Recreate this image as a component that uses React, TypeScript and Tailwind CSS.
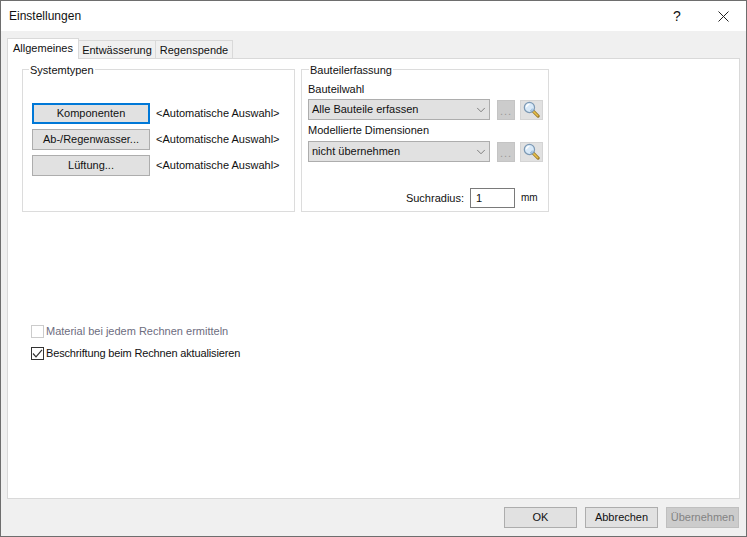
import React from 'react';
import { ChevronDown } from 'lucide-react';

const font = { fontFamily: '"Liberation Sans", Arial, sans-serif' };

const Magnifier = () => (
  <svg width="17" height="17" viewBox="0 0 18 18">
    <path d="M10.5 10.5 L16 16" stroke="#9a7a2a" strokeWidth="3.4" strokeLinecap="round" />
    <path d="M11 11 L15.6 15.6" stroke="#e8c04a" strokeWidth="1.6" strokeLinecap="round" />
    <circle cx="6.8" cy="6.8" r="5.4" fill="#d8e9f8" stroke="#7d9ab5" strokeWidth="1.3" />
    <path d="M3.6 6.6 A3.4 3.4 0 0 1 6.8 3.5" fill="none" stroke="#ffffff" strokeWidth="1.4" />
    <path d="M10 8 A3.6 3.6 0 0 1 7.6 10.4" fill="none" stroke="#8fb8de" strokeWidth="1.2" />
  </svg>
);

const TypeRow = ({ label, focused }: { label: string; focused?: boolean }) => (
  <div className="flex items-center gap-[6px]">
    <button
      className={
        focused
          ? 'w-[118px] h-[21px] bg-[#e1e1e1] border-2 border-[#0078d7] text-center text-[11px] leading-none'
          : 'w-[118px] h-[21px] bg-[#e1e1e1] border border-[#adadad] text-center text-[11px] leading-none'
      }
    >
      {label}
    </button>
    <span className="text-[11px] leading-none whitespace-nowrap">&lt;Automatische Auswahl&gt;</span>
  </div>
);

const SelectRow = ({ value }: { value: string }) => (
  <div className="flex items-center">
    <div className="w-[182px] h-[21px] bg-[#e1e1e1] border border-[#adadad] flex items-center justify-between pl-[3px] pr-[1px]">
      <span className="text-[11px] leading-none">{value}</span>
      <ChevronDown className="w-[14px] h-[14px] text-[#555555]" strokeWidth={1.2} />
    </div>
    <div className="ml-[7px] w-[18px] h-[20px] bg-[#cccccc] border border-[#c4c4c4] flex items-end justify-center text-[11px] leading-[15px] tracking-[1px] text-[#999999]">
      ...
    </div>
    <div className="ml-[5px] w-[23px] h-[20px] bg-[#e1e1e1] border border-[#d4d4d4] flex items-center justify-center">
      <Magnifier />
    </div>
  </div>
);

const FooterButton = ({ label, disabled }: { label: string; disabled?: boolean }) => (
  <button
    className={
      disabled
        ? 'w-[73px] h-[21px] bg-[#cccccc] border border-[#bfbfbf] text-[#838383] text-[11px] leading-none'
        : 'w-[73px] h-[21px] bg-[#e1e1e1] border border-[#adadad] text-[11px] leading-none'
    }
  >
    {label}
  </button>
);

export default function App() {
  return (
    <div style={font} className="w-[747px] h-[537px] bg-[#f0f0f0] border border-[#6e6e6e] flex flex-col text-[#111111] overflow-hidden">
      {/* title bar */}
      <div className="h-[30px] shrink-0 bg-white flex items-center pl-[8px]">
        <span className="text-[12px] flex-1">Einstellungen</span>
        <span className="w-[46px] text-center text-[14px] mr-[18px]">?</span>
        <svg className="mr-[17px]" width="11" height="11" viewBox="0 0 11 11">
          <path d="M0.5 0.5 L10.5 10.5 M10.5 0.5 L0.5 10.5" stroke="#222222" strokeWidth="1" fill="none" />
        </svg>
      </div>

      {/* tabs */}
      <div className="ml-[6px] mt-[7px] h-[20px] shrink-0 flex items-end relative z-10">
        <div className="w-[72px] h-[21px] -mb-[1px] bg-white border border-b-0 border-[#d9d9d9] text-[11px] leading-[19px] text-center">
          Allgemeines
        </div>
        <div className="w-[77px] h-[18px] border border-l-0 border-b-0 border-[#d9d9d9] text-[11px] leading-[19px] text-center">
          Entwässerung
        </div>
        <div className="w-[77px] h-[18px] border border-l-0 border-b-0 border-[#d9d9d9] text-[11px] leading-[19px] text-center">
          Regenspende
        </div>
      </div>

      {/* panel */}
      <div className="mx-[6px] h-[441px] shrink-0 bg-white border border-[#d9d9d9] pl-[14px] flex flex-col">
        <div className="flex gap-[6px] items-start">
          <fieldset className="w-[273px] min-w-0 h-[153px] border border-[#dcdcdc] pl-[9px]">
            <legend className="ml-[-3px] px-[1px] pt-[3px] pb-[1px] text-[11px] leading-[16px]">Systemtypen</legend>
            <div className="mt-[24px] flex flex-col gap-[5px]">
              <TypeRow label="Komponenten" focused />
              <TypeRow label="Ab-/Regenwasser..." />
              <TypeRow label="Lüftung..." />
            </div>
          </fieldset>

          <fieldset className="w-[248px] min-w-0 h-[153px] border border-[#dcdcdc] pl-[6px]">
            <legend className="ml-[1px] px-[1px] pt-[3px] pb-[1px] text-[11px] leading-[16px]">Bauteilerfassung</legend>
            <div className="text-[11px] leading-[16px] mt-[2px] mb-[2px]">Bauteilwahl</div>
            <SelectRow value="Alle Bauteile erfassen" />
            <div className="text-[11px] leading-[16px] mt-[2px] mb-[3px]">Modellierte Dimensionen</div>
            <SelectRow value="nicht übernehmen" />
            <div className="mt-[26px] flex items-center">
              <span className="w-[156px] text-right text-[11px] leading-none">Suchradius:</span>
              <div className="ml-[6px] w-[45px] h-[20px] bg-white border border-[#7a7a7a] text-[11px] leading-[18px] pl-[5px]">1</div>
              <span className="ml-[6px] text-[10px] leading-none">mm</span>
            </div>
          </fieldset>
        </div>

        <div className="mt-[113px] ml-[9px] flex flex-col gap-[9px]">
          <label className="flex items-center gap-[2px] text-[11px] leading-[13px] text-[#6d6d80]">
            <span className="w-[13px] h-[13px] border border-[#cccccc] bg-white" />
            Material bei jedem Rechnen ermitteln
          </label>
          <label className="flex items-center gap-[2px] text-[11px] leading-[13px] tracking-[-0.15px]">
            <span className="w-[13px] h-[13px] border border-[#333333] bg-white flex items-center justify-center">
              <svg width="11" height="11" viewBox="0 0 11 11">
                <path d="M1 5.5 L4 8.8 L10 1.8" stroke="#333333" strokeWidth="1.2" fill="none" />
              </svg>
            </span>
            Beschriftung beim Rechnen aktualisieren
          </label>
        </div>
      </div>

      {/* footer */}
      <div className="mt-[8px] mr-[7px] flex justify-end gap-[8px]">
        <FooterButton label="OK" />
        <FooterButton label="Abbrechen" />
        <FooterButton label="Übernehmen" disabled />
      </div>
    </div>
  );
}
